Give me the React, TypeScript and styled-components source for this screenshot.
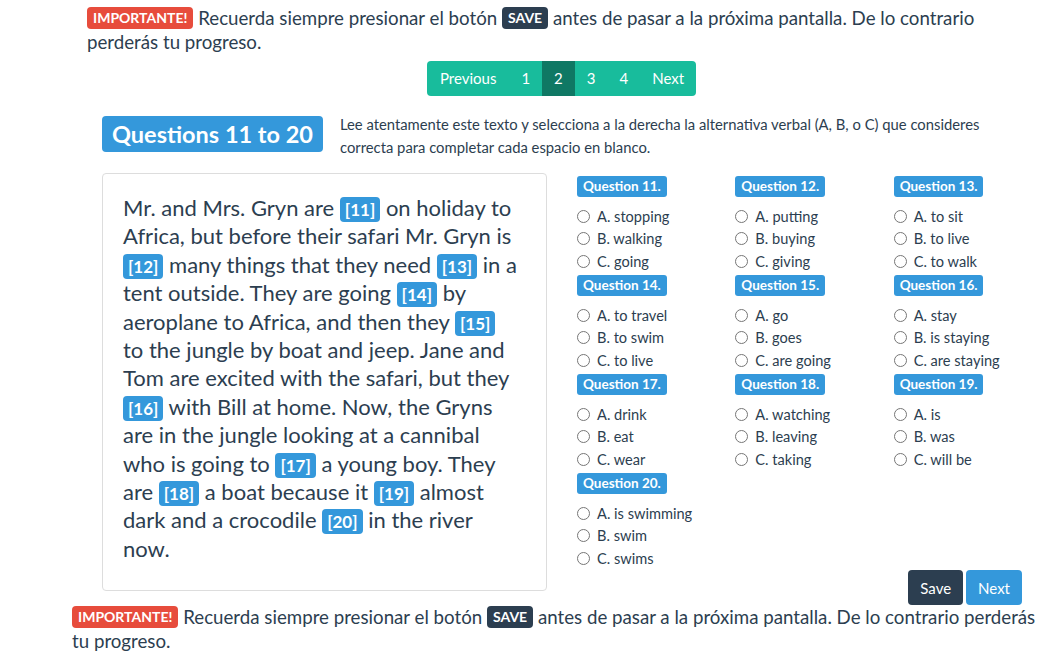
import React from 'react';
import styled, { createGlobalStyle } from 'styled-components';

const GlobalStyle = createGlobalStyle`
  body {
    margin: 0;
    font-family: Lato, "Open Sans", sans-serif;
    color: #2c3e50;
    background: #fff;
  }
  * {
    box-sizing: border-box;
  }
`;

const questions = [
  { n: 11, options: ['stopping', 'walking', 'going'] },
  { n: 12, options: ['putting', 'buying', 'giving'] },
  { n: 13, options: ['to sit', 'to live', 'to walk'] },
  { n: 14, options: ['to travel', 'to swim', 'to live'] },
  { n: 15, options: ['go', 'goes', 'are going'] },
  { n: 16, options: ['stay', 'is staying', 'are staying'] },
  { n: 17, options: ['drink', 'eat', 'wear'] },
  { n: 18, options: ['watching', 'leaving', 'taking'] },
  { n: 19, options: ['is', 'was', 'will be'] },
  { n: 20, options: ['is swimming', 'swim', 'swims'] },
];

const story: (string | number)[] = [
  'Mr. and Mrs. Gryn are ', 11, ' on holiday to Africa, but before their safari Mr. Gryn is ', 12,
  ' many things that they need ', 13, ' in a tent outside. They are going ', 14,
  ' by aeroplane to Africa, and then they ', 15,
  ' to the jungle by boat and jeep. Jane and Tom are excited with the safari, but they ', 16,
  ' with Bill at home. Now, the Gryns are in the jungle looking at a cannibal who is going to ', 17,
  ' a young boy. They are ', 18, ' a boat because it ', 19, ' almost dark and a crocodile ', 20,
  ' in the river now.',
];

const pages = ['Previous', '1', '2', '3', '4', 'Next'];

function Notice({ left, width }: { left: number; width: number }) {
  return (
    <NoticeText $left={left} $width={width}>
      <Label $color="#e74c3c">IMPORTANTE!</Label> Recuerda siempre presionar el botón{' '}
      <Label $color="#2c3e50">SAVE</Label> antes de pasar a la próxima pantalla. De lo contrario
      perderás tu progreso.
    </NoticeText>
  );
}

function App() {
  return (
    <>
      <GlobalStyle />
      <Page>
        <Notice left={87} width={900} />
        <Pagination>
          {pages.map((p) => (
            <PageItem key={p} $active={p === '2'}>
              {p}
            </PageItem>
          ))}
        </Pagination>
        <Main>
          <Header>
            <Title>Questions 11 to 20</Title>
            <Instructions>
              Lee atentamente este texto y selecciona a la derecha la alternativa verbal (A, B, o C) que
              consideres correcta para completar cada espacio en blanco.
            </Instructions>
          </Header>
          <Panel>
            {story.map((s, i) =>
              typeof s === 'number' ? <Blank key={i}>[{s}]</Blank> : <span key={i}>{s}</span>
            )}
          </Panel>
          <QuestionGrid>
            {questions.map((q) => (
              <QuestionGroup key={q.n}>
                <QuestionLabel>Question {q.n}.</QuestionLabel>
                <OptionList>
                  {q.options.map((o, i) => (
                    <Option key={o}>
                      <Radio type="radio" name={`q${q.n}`} />
                      {'ABC'[i]}. {o}
                    </Option>
                  ))}
                </OptionList>
              </QuestionGroup>
            ))}
          </QuestionGrid>
          <Actions>
            <Button $color="#2c3e50">Save</Button>
            <Button $color="#3498db">Next</Button>
          </Actions>
        </Main>
        <Notice left={72} width={965} />
      </Page>
    </>
  );
}

export default App;

const Page = styled.div`
  width: 1041px;
  padding-top: 6px;
`;

const NoticeText = styled.p<{ $left: number; $width: number }>`
  margin: 0 0 0 ${(p) => p.$left}px;
  width: ${(p) => p.$width}px;
  font-size: 18.7px;
  line-height: 24px;
`;

const Label = styled.span<{ $color: string }>`
  display: inline-block;
  background: ${(p) => p.$color};
  color: #fff;
  font-size: 14px;
  font-weight: 700;
  line-height: 1;
  padding: 4px 6px 4px;
  border-radius: 4px;
  vertical-align: 2px;
`;

const Pagination = styled.div`
  display: flex;
  justify-content: center;
  margin: 7px 0 0 82px;
`;

const PageItem = styled.span<{ $active: boolean }>`
  height: 35px;
  line-height: 35px;
  padding: 0 12px;
  font-size: 15px;
  color: #fff;
  background: ${(p) => (p.$active ? '#0f7864' : '#18bc9c')};
  &:first-child {
    border-radius: 4px 0 0 4px;
    padding: 0 13px 0 13px;
  }
  &:last-child {
    border-radius: 0 4px 4px 0;
  }
`;

const Main = styled.div`
  display: grid;
  grid-template-columns: 445px 445px;
  column-gap: 30px;
  margin: 20px 0 0 102px;
  width: 920px;
`;

const Header = styled.div`
  grid-column: 1 / -1;
  display: flex;
  align-items: flex-start;
  gap: 17px;
  margin-bottom: 14px;
`;

const Title = styled.h1`
  margin: 0;
  flex: none;
  background: #3498db;
  color: #fff;
  font-size: 23.5px;
  font-weight: 700;
  line-height: 36px;
  padding: 0 10px;
  border-radius: 4px;
`;

const Instructions = styled.p`
  margin: -3px 0 0;
  width: 650px;
  font-size: 14.8px;
  line-height: 23px;
`;

const Panel = styled.div`
  border: 1px solid #ddd;
  border-radius: 4px;
  padding: 20px 28px 27px 20px;
  font-size: 22px;
  line-height: 28.4px;
`;

const Blank = styled.span`
  display: inline-block;
  background: #3498db;
  color: #fff;
  font-size: 17px;
  font-weight: 700;
  line-height: 1;
  padding: 4px 5px 4px;
  border-radius: 4px;
  vertical-align: 0;
`;

const QuestionGrid = styled.div`
  display: grid;
  grid-template-columns: repeat(3, 1fr);
  column-gap: 30px;
  align-content: start;
  margin-top: 3px;
`;

const QuestionGroup = styled.div`
  padding-bottom: 2.5px;
`;

const QuestionLabel = styled.div`
  width: fit-content;
  background: #3498db;
  color: #fff;
  font-size: 13.5px;
  font-weight: 700;
  line-height: 21px;
  padding: 0 6px;
  border-radius: 3px;
`;

const OptionList = styled.div`
  margin-top: 8px;
  display: flex;
  flex-direction: column;
`;

const Option = styled.label`
  display: flex;
  align-items: center;
  height: 22.5px;
  font-size: 14.6px;
`;

const Radio = styled.input`
  margin: 0 7px 0 0;
  width: 13px;
  height: 13px;
`;

const Actions = styled.div`
  grid-column: 2;
  display: flex;
  justify-content: flex-end;
  gap: 3px;
  margin-top: -21px;
`;

const Button = styled.button<{ $color: string }>`
  height: 35px;
  padding: 0 12px;
  border: none;
  border-radius: 4px;
  background: ${(p) => p.$color};
  color: #fff;
  font-family: Lato, sans-serif;
  font-size: 15px;
`;
